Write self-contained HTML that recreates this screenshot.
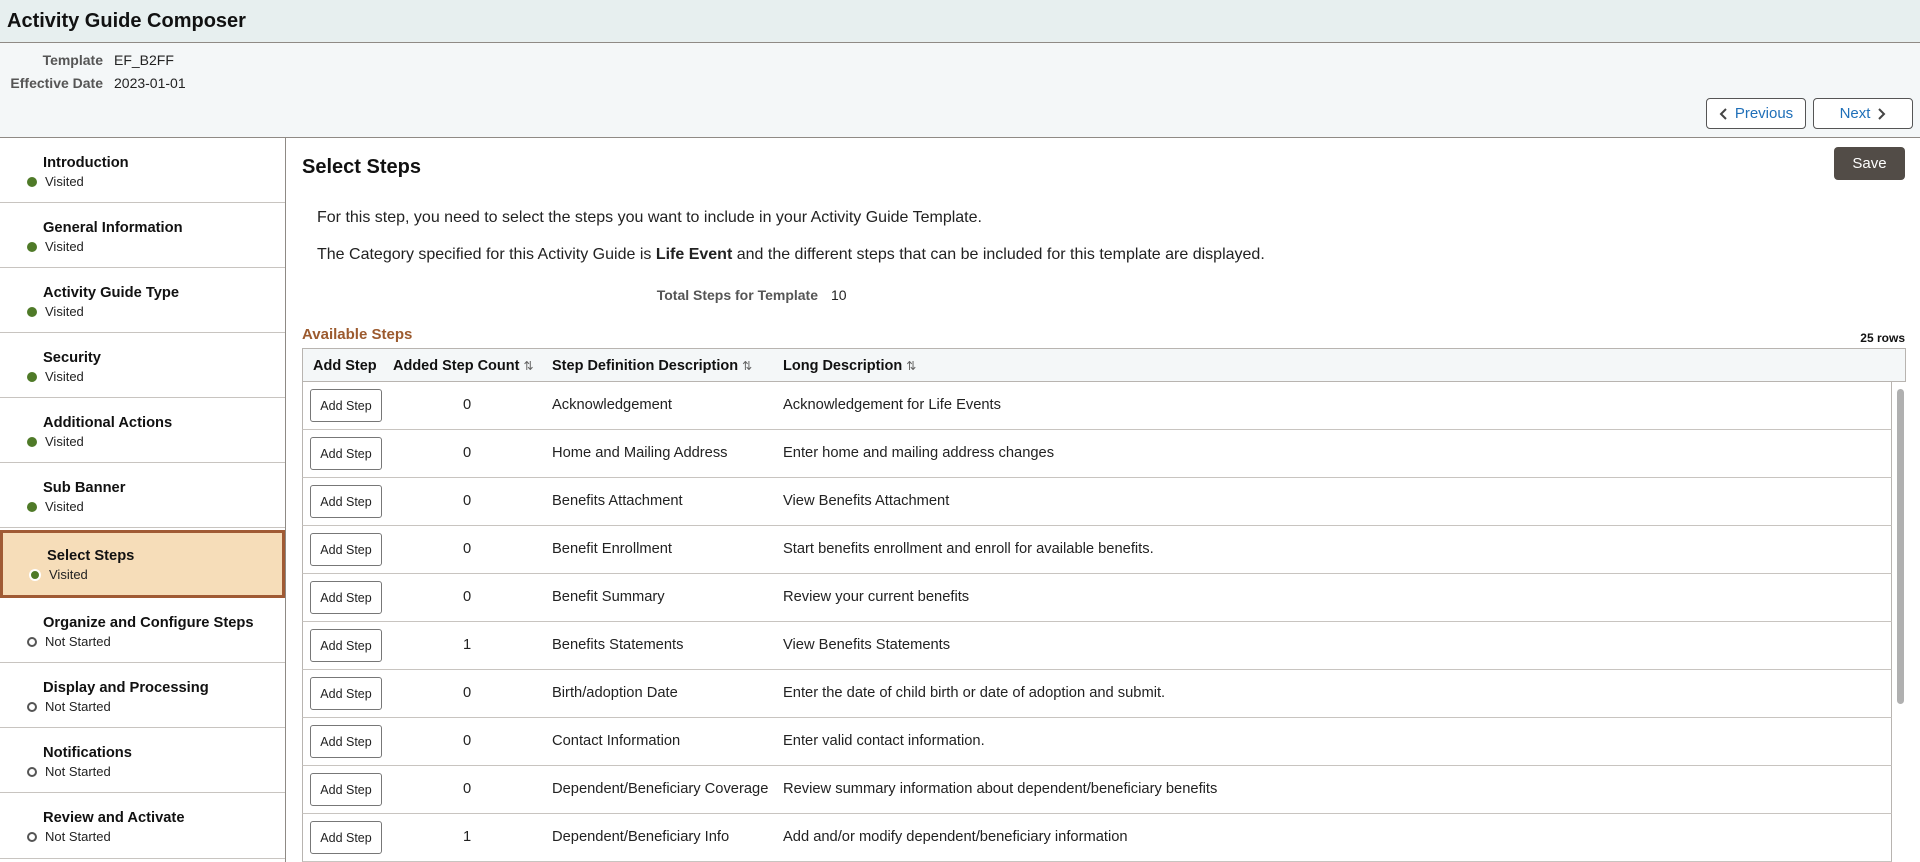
<!DOCTYPE html>
<html><head><meta charset="utf-8"><style>
*{box-sizing:border-box;margin:0;padding:0}
body{width:1920px;height:862px;overflow:hidden;font-family:"Liberation Sans",Arial,sans-serif;color:#222;background:#fff;position:relative}
.abs{position:absolute}
#tb{left:0;top:0;width:1920px;height:43px;background:#e7efef;border-bottom:1px solid #8f8a85}
#tb h1{position:absolute;left:7px;top:10px;font-size:20px;font-weight:bold;color:#111}
#info{left:0;top:43px;width:1920px;height:95px;background:#f4f7f8;border-bottom:1px solid #8f8a85}
.lbl{font-size:14px;color:#555;font-weight:bold;text-align:right;width:103px;left:0}
.val{font-size:14px;color:#222;left:114px}
.nb{top:98px;height:31px;border:1px solid #555;border-radius:4px;background:#fff;color:#1f6fb8;font-size:15px;display:flex;align-items:center;justify-content:center;gap:6px}
#nav{left:0;top:138px;width:286px;height:724px;border-right:1px solid #8f8a85}
.it{position:absolute;left:0;width:285px;height:65px;border-bottom:1px solid #c8c4c0}
.it b{position:absolute;left:43px;top:17px;font-size:14.7px;color:#111}
.it span{position:absolute;left:45px;top:36px;font-size:13px;color:#222}
.it i{position:absolute;left:27px;top:39px;width:10px;height:10px;border-radius:50%}
.g{background:#4f7a28}.o{border:2px solid #555;background:#fff}
.sel{background:#f6ddb9;border:3px solid #a05a34;height:68px}
.sel b{left:44px;top:15px}.sel span{left:46px;top:34px}.sel i{left:26px;top:36px;border:2px solid #fff;width:12px;height:12px}
.hdr{position:absolute;left:302px;top:348px;width:1604px;height:34px;background:#f4f7f8;border:1px solid #b8b4b0}
.hdr div{position:absolute;top:9px;font-weight:bold;font-size:14.5px;color:#111}
.row{position:absolute;left:302px;width:1590px;height:48px;border-bottom:1px solid #c8c4c0;border-left:1px solid #b8b4b0;border-right:1px solid #b8b4b0;font-size:14.7px}
.row div{position:absolute;top:15px}
.btn{left:7px;top:7px!important;width:72px;height:33px;border:1px solid #777;border-radius:3px;font-size:12.5px;display:flex;align-items:center;justify-content:center;color:#222}
.ar{font-weight:normal;color:#666;font-size:12px}
</style></head><body>
<div id="tb" class="abs"><h1>Activity Guide Composer</h1></div>
<div id="info" class="abs">
<div class="abs lbl" style="top:9px">Template</div><div class="abs val" style="top:9px">EF_B2FF</div>
<div class="abs lbl" style="top:32px">Effective Date</div><div class="abs val" style="top:32px">2023-01-01</div>
</div>
<div class="abs nb" style="left:1706px;width:100px"><svg width="10" height="14" viewBox="0 0 10 14"><path d="M7 2L2 7l5 5" stroke="#444" stroke-width="2" fill="none"/></svg>Previous</div>
<div class="abs nb" style="left:1813px;width:100px">Next<svg width="10" height="14" viewBox="0 0 10 14"><path d="M3 2l5 5-5 5" stroke="#444" stroke-width="2" fill="none"/></svg></div>
<div id="nav" class="abs">
<div class="it" style="top:0"><b>Introduction</b><i class="g"></i><span>Visited</span></div>
<div class="it" style="top:65px"><b>General Information</b><i class="g"></i><span>Visited</span></div>
<div class="it" style="top:130px"><b>Activity Guide Type</b><i class="g"></i><span>Visited</span></div>
<div class="it" style="top:195px"><b>Security</b><i class="g"></i><span>Visited</span></div>
<div class="it" style="top:260px"><b>Additional Actions</b><i class="g"></i><span>Visited</span></div>
<div class="it" style="top:325px"><b>Sub Banner</b><i class="g"></i><span>Visited</span></div>
<div class="it sel" style="top:392px"><b>Select Steps</b><i class="g"></i><span>Visited</span></div>
<div class="it" style="top:460px"><b>Organize and Configure Steps</b><i class="o"></i><span>Not Started</span></div>
<div class="it" style="top:525px"><b>Display and Processing</b><i class="o"></i><span>Not Started</span></div>
<div class="it" style="top:590px"><b>Notifications</b><i class="o"></i><span>Not Started</span></div>
<div class="it" style="top:655px;height:66px"><b>Review and Activate</b><i class="o"></i><span>Not Started</span></div>
</div>
<div class="abs" style="left:302px;top:156px;font-size:20px;font-weight:bold;color:#111">Select Steps</div>
<div class="abs" style="left:1834px;top:147px;width:71px;height:33px;background:#524c47;border-radius:4px;color:#fff;font-size:15px;display:flex;align-items:center;justify-content:center">Save</div>
<div class="abs" style="left:317px;top:209px;font-size:16px">For this step, you need to select the steps you want to include in your Activity Guide Template.</div>
<div class="abs" style="left:317px;top:246px;font-size:16px">The Category specified for this Activity Guide is <b>Life Event</b> and the different steps that can be included for this template are displayed.</div>
<div class="abs" style="left:600px;width:218px;text-align:right;top:287px;font-size:14px;font-weight:bold;color:#555">Total Steps for Template</div>
<div class="abs" style="left:831px;top:287px;font-size:14px">10</div>
<div class="abs" style="left:302px;top:326px;font-size:15px;font-weight:bold;color:#9c5a2e">Available Steps</div>
<div class="abs" style="left:1800px;width:105px;text-align:right;top:331px;font-size:12px;font-weight:bold;color:#111">25 rows</div>
<div class="hdr"><div style="left:10px">Add Step</div><div style="left:90px">Added Step Count <span class="ar">⇅</span></div><div style="left:249px">Step Definition Description <span class="ar">⇅</span></div><div style="left:480px">Long Description <span class="ar">⇅</span></div></div>
<div class="row" style="top:382px"><div class="btn">Add Step</div><div style="left:160px">0</div><div style="left:249px">Acknowledgement</div><div style="left:480px">Acknowledgement for Life Events</div></div>
<div class="row" style="top:430px"><div class="btn">Add Step</div><div style="left:160px">0</div><div style="left:249px">Home and Mailing Address</div><div style="left:480px">Enter home and mailing address changes</div></div>
<div class="row" style="top:478px"><div class="btn">Add Step</div><div style="left:160px">0</div><div style="left:249px">Benefits Attachment</div><div style="left:480px">View Benefits Attachment</div></div>
<div class="row" style="top:526px"><div class="btn">Add Step</div><div style="left:160px">0</div><div style="left:249px">Benefit Enrollment</div><div style="left:480px">Start benefits enrollment and enroll for available benefits.</div></div>
<div class="row" style="top:574px"><div class="btn">Add Step</div><div style="left:160px">0</div><div style="left:249px">Benefit Summary</div><div style="left:480px">Review your current benefits</div></div>
<div class="row" style="top:622px"><div class="btn">Add Step</div><div style="left:160px">1</div><div style="left:249px">Benefits Statements</div><div style="left:480px">View Benefits Statements</div></div>
<div class="row" style="top:670px"><div class="btn">Add Step</div><div style="left:160px">0</div><div style="left:249px">Birth/adoption Date</div><div style="left:480px">Enter the date of child birth or date of adoption and submit.</div></div>
<div class="row" style="top:718px"><div class="btn">Add Step</div><div style="left:160px">0</div><div style="left:249px">Contact Information</div><div style="left:480px">Enter valid contact information.</div></div>
<div class="row" style="top:766px"><div class="btn">Add Step</div><div style="left:160px">0</div><div style="left:249px">Dependent/Beneficiary Coverage</div><div style="left:480px">Review summary information about dependent/beneficiary benefits</div></div>
<div class="row" style="top:814px"><div class="btn">Add Step</div><div style="left:160px">1</div><div style="left:249px">Dependent/Beneficiary Info</div><div style="left:480px">Add and/or modify dependent/beneficiary information</div></div>
<div class="abs" style="left:1897px;top:389px;width:7px;height:315px;background:#b0b0b0;border-radius:4px"></div>
</body></html>
